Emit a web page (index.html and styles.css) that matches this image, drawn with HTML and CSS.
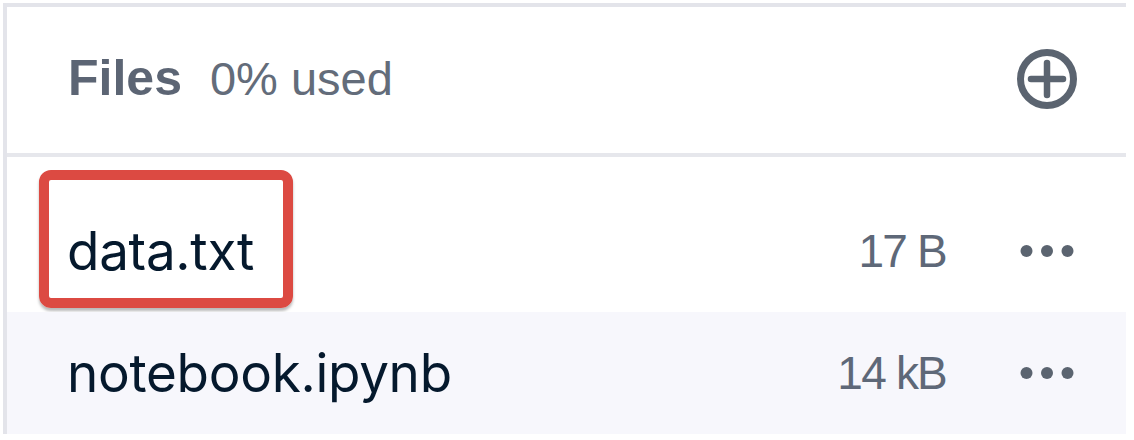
FILE: index.html
```html
<!DOCTYPE html>
<html lang="en">
<head>
<meta charset="utf-8">
<title>Files</title>
<link rel="stylesheet" href="styles.css">
</head>
<body>
<section class="panel">
  <header class="panel-head">
    <div class="head-title">
      <span class="title">Files</span>
      <span class="usage">0% used</span>
    </div>
    <button class="add-btn" aria-label="Add file">
      <svg width="62" height="62" viewBox="0 0 62 62" fill="none" stroke="#5b6470">
        <circle cx="31" cy="31" r="26.5" stroke-width="7"/>
        <line x1="15" y1="31" x2="47" y2="31" stroke-width="6.5" stroke-linecap="round"/>
        <line x1="31" y1="15" x2="31" y2="47" stroke-width="6.5" stroke-linecap="round"/>
      </svg>
    </button>
  </header>
  <ul class="file-list">
    <li class="file-row">
      <span class="file-name">data.txt</span>
      <span class="file-size">17 B</span>
      <span class="more">
        <svg width="54" height="14" viewBox="0 0 54 14" fill="#5b6470"><circle cx="6.5" cy="7" r="6"/><circle cx="27" cy="7" r="6"/><circle cx="47.5" cy="7" r="6"/></svg>
      </span>
      <span class="highlight"></span>
    </li>
    <li class="file-row alt">
      <span class="file-name">notebook.ipynb</span>
      <span class="file-size">14 kB</span>
      <span class="more">
        <svg width="54" height="14" viewBox="0 0 54 14" fill="#5b6470"><circle cx="6.5" cy="7" r="6"/><circle cx="27" cy="7" r="6"/><circle cx="47.5" cy="7" r="6"/></svg>
      </span>
    </li>
  </ul>
</section>
</body>
</html>
```

FILE: styles.css
```css
html, body {
  margin: 0;
  padding: 0;
  background: #ffffff;
}

body {
  padding: 3px 0 0 3px;
  width: 1134px;
  height: 440px;
  box-sizing: border-box;
  overflow: hidden;
}

.panel {
  width: 1123px;
  border-left: 4px solid #e3e4ea;
  border-top: 4px solid #e3e4ea;
  box-sizing: border-box;
}

.panel-head {
  display: flex;
  align-items: center;
  justify-content: space-between;
  padding: 0 48px 4px 61px;
  border-bottom: 4px solid #e6e7ec;
  box-sizing: border-box;
  height: 150px;
}

.head-title {
  display: flex;
  align-items: baseline;
  gap: 28px;
  font-family: "Liberation Sans", Arial, sans-serif;
  color: #5c6574;
}

.title {
  font-size: 50px;
  font-weight: 700;
}

.usage {
  font-size: 47px;
  font-weight: 400;
  color: #636c7a;
}

.add-btn {
  border: 0;
  background: none;
  padding: 0;
  display: flex;
  margin-top: 2px;
}

.file-list {
  list-style: none;
  margin: 0;
  padding: 33px 0 0 0;
}

.file-row {
  position: relative;
  height: 122px;
  display: flex;
  align-items: center;
  padding: 0 52px 0 60px;
}

.file-row.alt {
  background: #f7f7fc;
}

.file-name {
  flex: 1;
  font-family: "Inter", "Open Sans", sans-serif;
  font-size: 53px;
  color: #05192d;
  letter-spacing: -0.3px;
}

.file-size {
  font-family: "Liberation Sans", Arial, sans-serif;
  font-size: 46px;
  color: #5e6878;
  letter-spacing: -1.8px;
  margin-right: 74px;
}

.more {
  display: flex;
}

.highlight {
  position: absolute;
  left: 32px;
  top: -20px;
  width: 254px;
  height: 138px;
  border: 10px solid #dc4a42;
  border-radius: 12px;
  box-sizing: border-box;
  box-shadow: 0 3px 3px rgba(0, 0, 0, 0.28);
}
```
